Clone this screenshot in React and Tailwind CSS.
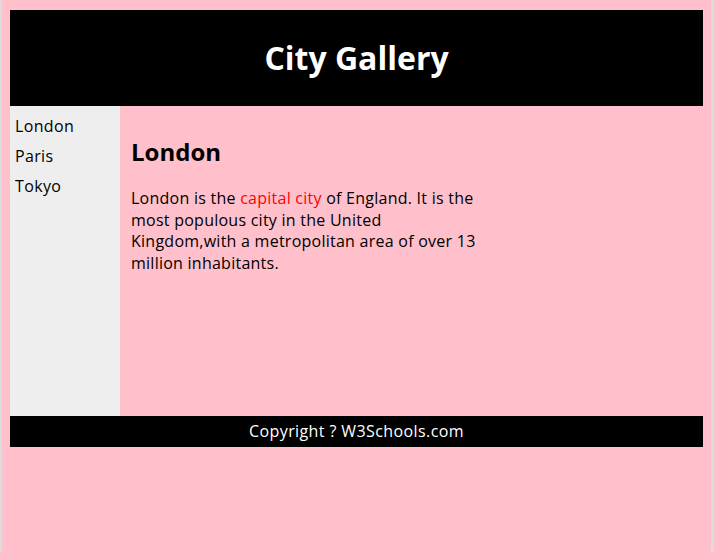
export default function App() {
    return (
        <div className="h-[552px] bg-[#ffc0cb] border-l-2 border-r-[3px] border-[#dcdcdc] px-2 pt-[10px] font-['Open_Sans',sans-serif] text-black">
            <header className="h-[96px] bg-black flex items-center justify-center">
                <h1 className="text-[32px] font-bold text-white">City Gallery</h1>
            </header>

            <div className="flex h-[310px]">
                <nav className="w-[110px] bg-[#eeeeee] pt-[5px] px-[5px]">
                    <ul className="text-[16px] tracking-[0.35px]">
                        <li className="leading-[30px]">London</li>
                        <li className="leading-[30px]">Paris</li>
                        <li className="leading-[30px]">Tokyo</li>
                    </ul>
                </nav>

                <article className="flex-1 px-[11px] pt-[31px]">
                    <h2 className="text-[24px] font-bold leading-[30px]">London</h2>
                    <p className="mt-[21px] max-w-[350px] text-[16px] leading-[21.5px] tracking-[0.25px]">
                        London is the <span className="text-[#ff0000]">capital city</span> of England. It is the most populous city in the United Kingdom,with a metropolitan area of over 13 million inhabitants.
                    </p>
                </article>
            </div>

            <footer className="h-[31px] bg-black text-white text-center text-[16px] tracking-[0.4px] leading-[31px]">
                Copyright ? W3Schools.com
            </footer>
        </div>
    );
}
